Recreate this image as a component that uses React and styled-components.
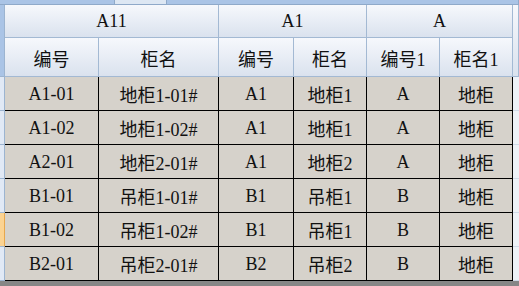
import React from "react";
import styled, { createGlobalStyle } from "styled-components";

const GlobalStyle = createGlobalStyle`
  html, body {
    margin: 0;
    padding: 0;
    background: #eef2f8;
    overflow: hidden;
  }
  * {
    box-sizing: border-box;
  }
`;

const Sheet = styled.div`
  display: grid;
  grid-template-columns: 5px 94px 120px 75px 73px 73px 73px 1fr;
  grid-template-rows: 5px 33px 39px repeat(6, 34px) 1fr;
  width: 519px;
  height: 286px;
  font-family: "Liberation Serif", "Noto Sans CJK SC", serif;
  font-size: 18px;
  color: #111;
`;

const TopStrip = styled.div`
  grid-column: 1 / -1;
  display: flex;
  border-bottom: 1px solid #8fa9c9;
`;

const TopSeg = styled.div`
  width: ${(p) => p.$w || "auto"};
  flex: ${(p) => (p.$w ? "none" : 1)};
  background: ${(p) => (p.$light ? "#dde7f3" : "#aac4e6")};
  border-right: 1px solid #8fa9c9;
`;

const Corner = styled.div`
  grid-row: span 2;
  background: #aac4e6;
  border-right: 1px solid #9cb4d0;
  border-bottom: 1px solid #9cb4d0;
`;

const Head = styled.div`
  grid-column: span ${(p) => p.$span || 1};
  grid-row: span ${(p) => p.$rows || 1};
  display: flex;
  align-items: center;
  justify-content: center;
  background: linear-gradient(#f6f8fc, #dae2ee);
  border-right: 1px solid #a3b9d3;
  border-bottom: 1px solid #a3b9d3;
  padding-top: 1px;
`;

const RowMark = styled.div`
  background: ${(p) => (p.$active ? "#fbd392" : "#e1e9f5")};
  border-right: 1px solid ${(p) => (p.$active ? "#e7a74c" : "#9cb4d0")};
  border-bottom: 1px solid #9cb4d0;
`;

const Cell = styled.div`
  display: flex;
  align-items: center;
  justify-content: center;
  background: #d6d2cb;
  border-right: 1px solid #000;
  border-bottom: 1px solid #000;
  padding-top: 1px;
  white-space: nowrap;
`;

const Filler = styled.div`
  background: #eef2f8;
  border-bottom: 1px solid #d0dae8;
`;

const Footer = styled.div`
  grid-column: 1 / -1;
  background: #868686;
`;

const rows = [
  ["A1-01", "地柜1-01#", "A1", "地柜1", "A", "地柜"],
  ["A1-02", "地柜1-02#", "A1", "地柜1", "A", "地柜"],
  ["A2-01", "地柜2-01#", "A1", "地柜2", "A", "地柜"],
  ["B1-01", "吊柜1-01#", "B1", "吊柜1", "B", "地柜"],
  ["B1-02", "吊柜1-02#", "B1", "吊柜1", "B", "地柜"],
  ["B2-01", "吊柜2-01#", "B2", "吊柜2", "B", "地柜"],
];

export default function App() {
  return (
    <>
      <GlobalStyle />
      <Sheet>
        <TopStrip>
          <TopSeg $w="115px" />
          <TopSeg $w="52px" $light />
          <TopSeg />
        </TopStrip>

        <Corner />
        <Head $span={2}>A11</Head>
        <Head $span={2}>A1</Head>
        <Head $span={2}>A</Head>
        <Head $rows={2} />

        <Head>编号</Head>
        <Head>柜名</Head>
        <Head>编号</Head>
        <Head>柜名</Head>
        <Head>编号1</Head>
        <Head>柜名1</Head>

        {rows.map((r, i) => (
          <React.Fragment key={i}>
            <RowMark $active={i === 4} />
            {r.map((v, j) => (
              <Cell key={j}>{v}</Cell>
            ))}
            <Filler />
          </React.Fragment>
        ))}

        <Footer />
      </Sheet>
    </>
  );
}
